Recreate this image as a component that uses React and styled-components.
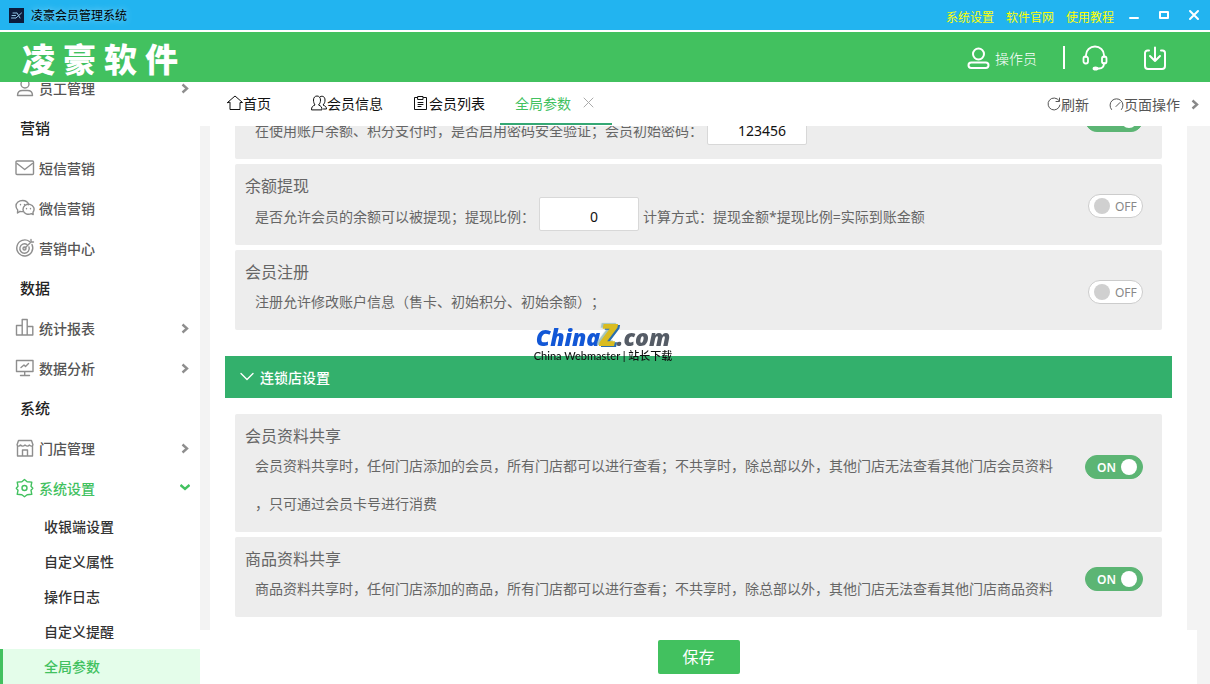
import { useId, useLayoutEffect, useRef, useState } from 'react';
import styled, { createGlobalStyle, css } from 'styled-components';

const GlobalStyle = createGlobalStyle`
  * {
    box-sizing: border-box;
  }
  body {
    margin: 0;
    background: #fff;
    color: #333;
    font-family: "Noto Sans", "Noto Sans CJK SC", sans-serif;
    font-size: 14px;
    text-spacing-trim: space-all;
  }
  button, input {
    font: inherit;
  }
  button {
    padding: 0;
    border: 0;
    background: none;
    color: inherit;
    cursor: pointer;
  }
  a {
    color: inherit;
    text-decoration: none;
  }
  svg {
    display: block;
    flex: none;
    fill: none;
    stroke: currentColor;
    stroke-linecap: round;
    stroke-linejoin: round;
  }
`
const Window = styled.div`
  height: 100vh;
  display: flex;
  flex-direction: column;
`

/* title bar */
const TitleBar = styled.div`
  flex: none;
  height: 32px;
  padding: 0 10px 0 9px;
  display: flex;
  align-items: center;
  background: #22b4f0;
  border-bottom: 2px solid #fff;
  font-size: 12px;
`
const AppName = styled.span`
  flex: 1;
  margin-left: 7px;
  color: #000;
  text-shadow: 0 0 6px #9adcf8;
`
const TitleLinks = styled.nav`
  display: flex;
  gap: 12px;
  padding-top: 3px;
  margin-right: 14px;
  color: #ff0;
`
const WindowButtons = styled.div`
  display: flex;
  gap: 18px;
  color: #fff;
`

/* green header */
const Header = styled.header`
  flex: none;
  height: 50px;
  padding: 0 43px 0 22px;
  display: flex;
  align-items: center;
  background: #42c15f;
  color: #fff;
`
const Logo = styled.div`
  flex: 1;
  display: flex;
  gap: 8px;
  padding-top: 6px;
  font-size: 33px;
  font-weight: 900;
  line-height: 40px;
`
const Operator = styled.button`
  display: flex;
  align-items: center;
  gap: 5px;
  padding-top: 2px;
  font-weight: 300;
`
const Divider = styled.span`
  width: 2px;
  height: 23px;
  margin: 0 17px 0 26px;
  background: #fff;
`
const HeaderButton = styled.button`
  padding-top: 2px;
  & + & {
    margin-left: 35px;
  }
`

/* side menu */
const Body = styled.div`
  flex: 1;
  min-height: 0;
  display: flex;
`
const SideMenu = styled.nav`
  flex: none;
  width: 200px;
  overflow-y: auto;
  scrollbar-width: none;
  background: #fff;
`
const Section = styled.h2`
  height: 40px;
  margin: 0;
  padding-left: 20px;
  color: #222;
  font-size: 15px;
  font-weight: 500;
  line-height: 38px;
`
const MenuItem = styled.button`
  width: 100%;
  height: 40px;
  padding: 0 10px 2px 15px;
  display: flex;
  align-items: center;
  gap: 4px;
  color: ${props => props.$open ? "#42c15f" : "#555"};
  font-weight: 500;

  svg {
    color: ${props => props.$open ? "#42c15f" : "#8e8e8e"};
  }
  span {
    flex: 1;
    text-align: left;
  }
`
const SubItem = styled.a`
  display: block;
  padding-left: 44px;
  line-height: 35px;
  font-weight: 500;
  ${props => props.$active && css`
    padding-left: 41px;
    border-left: 3px solid #42c15f;
    background: #e4fdea;
    color: #42c15f;
  `}
`

/* tabs */
const Main = styled.main`
  flex: 1;
  min-width: 0;
  display: flex;
  flex-direction: column;
  background: #f3f3f3;
`
const TabBar = styled.div`
  flex: none;
  height: 44px;
  padding: 0 10px 0 12px;
  display: flex;
  background: #fff;
  color: #111;
`
const Tab = styled.button`
  height: 43px;
  padding: 0 15px;
  display: flex;
  align-items: center;
  border-bottom: 2px solid transparent;
  &:first-child {
    margin-right: 10px;
  }
  ${props => props.$active && css`
    gap: 12px;
    padding-right: 18px;
    border-color: #35a874;
    color: #42c15f;
    svg {
      color: #aaa;
    }
  `}
`
const TabTools = styled.div`
  flex: 1;
  display: flex;
  justify-content: flex-end;
  align-items: center;
  color: #555;
`
const Tool = styled.button`
  display: flex;
  align-items: center;
  margin-right: ${props => props.$gap}px;
`
const MoreButton = styled.button`
  color: #888;
`

/* settings */
const Settings = styled.div`
  flex: 1;
  min-height: 0;
  margin: 0 23px 0 10px;
  padding: 0 15px;
  overflow-y: auto;
  scrollbar-width: none;
  background: #fff;
`
const CardList = styled.div`
  display: flex;
  flex-direction: column;
  gap: 5px;
  padding: 0 10px 13px;
`
const GroupHeader = styled.button`
  width: 100%;
  height: 42px;
  margin: 13px 0 16px;
  padding: 0 15px;
  display: flex;
  align-items: center;
  gap: 6px;
  background: #33b06c;
  color: #fff;
  font-weight: 500;
`
const Card = styled.section`
  display: flex;
  justify-content: space-between;
  padding: 10px 19px 9px 10px;
  background: #ededed;
  border-radius: 2px;
  color: #666;
`
const CardTitle = styled.h3`
  height: 23px;
  margin: 0;
  font-size: 16px;
  font-weight: 400;
  line-height: 24px;
`
const CardText = styled.p`
  margin: 0 20px 0 10px;
  line-height: 38px;
`
const Field = styled.div`
  height: 39px;
  margin-left: 10px;
  display: flex;
  gap: 4px;
  line-height: 39px;

  label {
    display: flex;
    gap: 4px;
  }
`
const FieldInput = styled.input`
  width: 100px;
  height: 34px;
  padding: 5px 0 0 10px;
  border: 1px solid #d8d8d8;
  border-radius: 2px;
  background: #fff;
  color: #111;
  text-align: center;
`
const Switch = styled.label`
  flex: none;
  position: relative;
  width: ${props => props.$on ? 58 : 55}px;
  height: 24px;
  margin-top: ${props => props.$tall ? 31 : 20}px;
  padding: 1px 5px 0;
  display: flex;
  flex-direction: ${props => props.$on ? "row-reverse" : "row"};
  align-items: center;
  gap: 5px;
  border: 1px solid ${props => props.$on ? "#5cb574" : "#ccc"};
  border-radius: 12px;
  background: ${props => props.$on ? "#5cb574" : "#fff"};
  color: ${props => props.$on ? "#fff" : "#888"};
  font-size: 12px;
  font-weight: ${props => props.$on ? 600 : 400};
  line-height: 22px;

  input {
    position: absolute;
    inset: 0;
    margin: 0;
    opacity: 0;
    cursor: pointer;
  }
`
const Knob = styled.i`
  width: 16px;
  height: 16px;
  margin-bottom: 1px;
  border-radius: 50%;
  background: ${props => props.$on ? "#fff" : "#d0d0d0"};
`
const Footer = styled.div`
  flex: none;
  height: 54px;
  margin-right: 13px;
  display: flex;
  align-items: center;
  justify-content: center;
  background: #fff;
`
const SaveButton = styled.button`
  width: 82px;
  height: 34px;
  padding-bottom: 2px;
  background: #42c15f;
  border-radius: 2px;
  color: #fff;
  font-size: 16px;
`

/* watermark */
const Watermark = styled.div`
  position: fixed;
  inset: 0;
  padding-right: 4px;
  display: flex;
  flex-direction: column;
  align-items: center;
  justify-content: center;
  pointer-events: none;
`
const Brand = styled.div`
  display: flex;
  align-items: baseline;
  height: 27px;
  color: #1257d6;
  font: italic 800 23px/26px "Open Sans", sans-serif;

  b {
    color: #d9bc20;
    font-size: 30px;
    font-weight: 800;
    text-shadow: 2px 1px 0 #2b6fae, -2px -1px 1px #a3c4bd;
  }
  span {
    color: #555c66;
  }
`
const BrandNote = styled.div`
  color: #111;
  font: 500 11px/14px Lato, "Noto Sans CJK SC", sans-serif;
`

const menuIcons = {
  staff: <><circle cx="10" cy="6" r="4" /><path d="M2.5 17.5c0-3.500 2.500-5 5-5h5c2.500 0 5 1.500 5 5z" /></>,
  mail: <><rect x="1" y="3" width="17.500" height="13.500" rx="1" /><path d="M2 5.500l7.700 6 7.700-6" /></>,
  wechat: <><path d="M8 13.500c-1 .2-2 .1-3-.2L2.500 15l.2-3A5.700 5.700 0 0 1 1 8c0-3.300 3-5.500 6.500-5.500 3 0 5.500 1.700 6.200 4.200" /><path d="M18.200 16.500l-1.900-.9A5.500 5 0 1 1 18 14.200z" /><path d="M5.500 6.500v.2M9.500 6.500v.2M11.500 10.500v.2M15.500 10.500v.2" /></>,
  target: <><path d="M14.500 3.500A8 8 0 1 0 17 6.500" /><path d="M12 6.500A4.700 4.700 0 1 0 14 9" /><circle cx="9.500" cy="10.500" r="1.500" /><path d="M10 10l6-6V1.500M16 4h2.500" /></>,
  bars: <><path d="M1.500 17V7.500h5.700V17zM7.200 17V1.500h5V17zM12.200 8.500h5.600V17h-5.600" /></>,
  monitor: <><path d="M1.500 2.500h16.500v11H1.500zM9.700 13.500v3M5.500 17.500h9" /><path d="M6 9.500l3-2.500 1.500 1.500 3-3" /></>,
  shop: <><path d="M2.500 7.500v10.500h15V7.500M3.500 2.500h13l1.500 4.500c-.8 1.500-2.600 1.500-3.500 0-1 1.500-2.700 1.500-4.500 0-1.500 1.500-3.500 1.500-4.500 0-1 1.500-2.700 1.500-3.500 0zM7.500 17.500v-5.500h5v5.500" /></>,
  gear: <><path d="M9.500 1.500l2.600 2.200 4.700.4-.8 4.200 1.800 2-1.800 2 .8 4-4.700.5-2.600 2-2.600-2-4.700-.5.8-4-1.700-2 1.700-2-.8-4.200 4.700-.4z" /><circle cx="9.500" cy="10" r="2.500" /></>,
}

const menu = [
  { icon: "staff", text: "员工管理", more: true },
  { section: "营销" },
  { icon: "mail", text: "短信营销" },
  { icon: "wechat", text: "微信营销" },
  { icon: "target", text: "营销中心" },
  { section: "数据" },
  { icon: "bars", text: "统计报表", more: true },
  { icon: "monitor", text: "数据分析", more: true },
  { section: "系统" },
  { icon: "shop", text: "门店管理", more: true },
  { icon: "gear", text: "系统设置", more: true, open: true },
]
const subMenu = ["收银端设置", "自定义属性", "操作日志", "自定义提醒", "全局参数"]

function MenuIcon({ name }) {
  return <svg width="20" height="20" viewBox="0 0 20 20" strokeWidth="1.4">{menuIcons[name]}</svg>
}

function Chevron({ down }) {
  return (
    <svg width="10" height="12" viewBox="0 0 10 12" strokeWidth="2.400">
      <path d={down ? "M.5 3L5 7l4.500-4" : "M2.500 2.500l4.500 4-4.500 4"} strokeLinecap="butt" strokeLinejoin="miter" />
    </svg>
  )
}

// opens a scroll area at its end
function useScrolledToEnd() {
  const ref = useRef(null);
  useLayoutEffect(() => {
    ref.current.scrollTop = ref.current.scrollHeight;
  }, []);
  return ref;
}

function Setting({ title, defaultOn, tall, children }) {
  const [on, setOn] = useState(!!defaultOn);
  const id = useId();

  return (
    <Card>
      <div id={id}>
        <CardTitle>{title}</CardTitle>
        {children}
      </div>
      <Switch $on={on} $tall={tall}>
        <input type="checkbox" role="switch" aria-labelledby={id} checked={on} onChange={() => setOn(!on)} />
        <Knob $on={on} />
        {on ? "ON" : "OFF"}
      </Switch>
    </Card>
  )
}

function App() {
  const menuRef = useScrolledToEnd();
  const settingsRef = useScrolledToEnd();

  return (
    <Window lang="zh-CN">
      <GlobalStyle />
      <TitleBar>
        <svg width="15" height="15" viewBox="0 0 15 15">
          <rect width="15" height="15" fill="#0c1c3c" stroke="none" />
          <path d="M4 5h3.500M3 7.500h3.500M2.500 10h4M8 5l3 5M12.500 5L7 10" stroke="#8fc4e4" />
        </svg>
        <AppName>凌豪会员管理系统</AppName>
        <TitleLinks>
          <a href="#settings">系统设置</a>
          <a href="#site">软件官网</a>
          <a href="#help">使用教程</a>
        </TitleLinks>
        <WindowButtons>
          <button aria-label="最小化">
            <svg width="12" height="12" viewBox="0 0 12 12" strokeWidth="2"><path d="M2 9h8" /></svg>
          </button>
          <button aria-label="最大化">
            <svg width="12" height="12" viewBox="0 0 12 12" strokeWidth="2"><path d="M2 3h8v6H2z" /></svg>
          </button>
          <button aria-label="关闭">
            <svg width="12" height="12" viewBox="0 0 12 12" strokeWidth="2"><path d="M2 2l8 8M10 2l-8 8" /></svg>
          </button>
        </WindowButtons>
      </TitleBar>

      <Header>
        <Logo><span>凌</span><span>豪</span><span>软</span><span>件</span></Logo>
        <Operator>
          <svg width="23" height="23" viewBox="0 0 23 23" strokeWidth="2">
            <circle cx="11.500" cy="7" r="5.500" />
            <rect x="1.500" y="15.500" width="20" height="5.500" rx="2.700" />
          </svg>
          操作员
        </Operator>
        <Divider />
        <HeaderButton aria-label="客服">
          <svg width="26" height="26" viewBox="0 0 26 26" strokeWidth="1.800">
            <path d="M4 12V10a9 8.500 0 0 1 18 0v2M22 18c0 3.500-1.500 5.500-5 5.500h-2" />
            <rect x="1.500" y="11.500" width="4.500" height="7" rx="2" />
            <rect x="20" y="11.500" width="4.500" height="7" rx="2" />
            <ellipse cx="13.500" cy="23.500" rx="2" ry="1.200" fill="currentColor" />
          </svg>
        </HeaderButton>
        <HeaderButton aria-label="下载">
          <svg width="24" height="24" viewBox="0 0 24 24" strokeWidth="2">
            <path d="M6 4.500H4.500a2.500 2.500 0 0 0-2.500 2.500v13a3 3 0 0 0 3 3h14a3 3 0 0 0 3-3V7a2.500 2.500 0 0 0-2.500-2.500H18M12 1.500V15M7 10l5 5 5-5" />
          </svg>
        </HeaderButton>
      </Header>

      <Body>
        <SideMenu ref={menuRef}>
          {menu.map(item => item.section ? (
            <Section key={item.section}>{item.section}</Section>
          ) : (
            <MenuItem key={item.text} $open={item.open}>
              <MenuIcon name={item.icon} />
              <span>{item.text}</span>
              {item.more && <Chevron down={item.open} />}
            </MenuItem>
          ))}
          {subMenu.map(text => (
            <SubItem key={text} href="#" $active={text === "全局参数"}>{text}</SubItem>
          ))}
        </SideMenu>

        <Main>
          <TabBar>
            <Tab>
              <svg width="16" height="16" viewBox="0 0 16 16" strokeWidth="1"><path d="M.5 7.500L8 1l7.500 6.500H13v7H3v-7z" /></svg>
              首页
            </Tab>
            <Tab>
              <svg width="16" height="16" viewBox="0 0 16 16" strokeWidth="1">
                <path d="M.5 14.500c0-2.500 1-3.500 3.500-4.500C3 8.500 2.500 7 2.500 5c0-2.500 1.500-4 3.500-4s3.500 1.500 3.500 4c0 2-.5 3.500-2 5 2.500 1 3.500 2 3.500 4.500zM9.500 1.500c2.500-1 4.500.5 4.500 3.500 0 2-.5 3.500-2 5 2.500 1 3.500 2 3.500 4h-3" />
              </svg>
              会员信息
            </Tab>
            <Tab>
              <svg width="16" height="16" viewBox="0 0 16 16" strokeWidth="1">
                <path d="M4.500 2.500h-3v12h12v-12h-3M5 1.500h5v3H5zM5 7.500h5M5 9.500h5M5 11.500h3" />
              </svg>
              会员列表
            </Tab>
            <Tab $active>
              全局参数
              <svg width="11" height="11" viewBox="0 0 11 11"><path d="M1 1l9 9M10 1l-9 9" /></svg>
            </Tab>
            <TabTools>
              <Tool $gap={20}>
                <svg width="14" height="14" viewBox="0 0 14 14" strokeWidth="1"><path d="M12 3.500A6 6 0 1 0 13 8M12.500 1v3.500H9" /></svg>
                刷新
              </Tool>
              <Tool $gap={10}>
                <svg width="15" height="14" viewBox="0 0 15 14" strokeWidth="1"><path d="M2.500 12.500a6.500 6.500 0 1 1 10 0M7 9.500l4-4" /></svg>
                页面操作
              </Tool>
              <MoreButton aria-label="更多"><Chevron /></MoreButton>
            </TabTools>
          </TabBar>

          <Settings ref={settingsRef}>
            <CardList>
              <Setting defaultOn>
                <Field>
                  <label>在使用账户余额、积分支付时，是否启用密码安全验证；会员初始密码：<FieldInput defaultValue="123456" /></label>
                </Field>
              </Setting>
              <Setting title="余额提现">
                <Field>
                  <label>是否允许会员的余额可以被提现；提现比例：<FieldInput defaultValue="0" /></label>
                  计算方式：提现金额*提现比例=实际到账金额
                </Field>
              </Setting>
              <Setting title="会员注册">
                <CardText>注册允许修改账户信息（售卡、初始积分、初始余额）；</CardText>
              </Setting>
            </CardList>
            <GroupHeader>
              <svg width="14" height="10" viewBox="0 0 14 10" strokeWidth="1.400"><path d="M1 1.500l6 6 6-6" /></svg>
              连锁店设置
            </GroupHeader>
            <CardList>
              <Setting title="会员资料共享" defaultOn tall>
                <CardText>
                  会员资料共享时，任何门店添加的会员，所有门店都可以进行查看；不共享时，除总部以外，其他门店无法查看其他门店会员资料<br />
                  ，只可通过会员卡号进行消费
                </CardText>
              </Setting>
              <Setting title="商品资料共享" defaultOn>
                <CardText>商品资料共享时，任何门店添加的商品，所有门店都可以进行查看；不共享时，除总部以外，其他门店无法查看其他门店商品资料</CardText>
              </Setting>
            </CardList>
          </Settings>

          <Footer>
            <SaveButton>保存</SaveButton>
          </Footer>
        </Main>
      </Body>

      <Watermark>
        <Brand>China<b>Z</b><span>.com</span></Brand>
        <BrandNote>China Webmaster | 站长下载</BrandNote>
      </Watermark>
    </Window>
  )
}

export default App
